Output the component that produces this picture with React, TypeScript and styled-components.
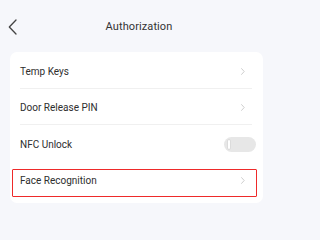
import React from "react";
import styled, { createGlobalStyle } from "styled-components";

const Global = createGlobalStyle`
  html, body { margin: 0; padding: 0; background: #f6f7fb; }
  body { font-family: Roboto, "Liberation Sans", Arial, sans-serif; }
  * { box-sizing: border-box; }
`;

const Page = styled.div`
  width: 270px;
  height: 218px;
  background: #f6f7fb;
  overflow: hidden;
`;

const Header = styled.div`
  height: 52px;
  display: grid;
  grid-template-columns: 1fr auto 1fr;
  align-items: center;
  padding: 0 0 0 8px;
`;

const BackBtn = styled.div`
  display: flex;
  align-items: center;
  width: 12px;
  height: 16px;
  margin-top: 2px;
`;

const Title = styled.div`
  font-size: 11px;
  color: #333;
  letter-spacing: 0.1px;
  margin-top: 1px;
`;

const Card = styled.div`
  margin: 0 7px 0 10px;
  background: #fff;
  border-radius: 7px;
  padding-top: 1px;
  padding-bottom: 6px;
`;

const Row = styled.div<{ $divider?: boolean }>`
  position: relative;
  height: 36px;
  margin: 0 11px 0 10px;
  padding: 2px 7px 0 0;
  display: flex;
  align-items: center;
  justify-content: space-between;
  border-bottom: ${(p) => (p.$divider ? "1px solid #f0f0f0" : "none")};
`;

const Label = styled.span`
  font-size: 10px;
  color: #2e2e2e;
`;

const Chevron = styled.svg`
  width: 4px;
  height: 7px;
`;

const Toggle = styled.div`
  width: 32px;
  height: 15px;
  border-radius: 8px;
  background: #e7e7e7;
  margin-right: -11px;
  padding: 2px 3px;
  display: flex;
  align-items: center;
`;

const Knob = styled.div`
  width: 4px;
  height: 11px;
  border-radius: 2px;
  background: #fff;
  border: 0.5px solid #dcdcdc;
`;

const Highlight = styled.div`
  position: absolute;
  left: -8px;
  right: -5px;
  top: 8px;
  bottom: 0;
  border: 1.5px solid #ee2a2a;
  border-radius: 1px;
  pointer-events: none;
`;

const RightChevron = () => (
  <Chevron viewBox="0 0 4 7">
    <path d="M0.6 0.6 L3.2 3.5 L0.6 6.4" fill="none" stroke="#c8c8c8" strokeWidth="0.9" strokeLinecap="round" strokeLinejoin="round" />
  </Chevron>
);

export default function App() {
  return (
    <Page>
      <Global />
      <Header>
        <BackBtn>
          <svg width="12" height="16" viewBox="0 0 12 16">
            <path d="M8 1 L1.3 8 L8 15" fill="none" stroke="#444" strokeWidth="1.3" strokeLinecap="round" strokeLinejoin="round" />
          </svg>
        </BackBtn>
        <Title>Authorization</Title>
        <div />
      </Header>
      <Card>
        <Row $divider>
          <Label>Temp Keys</Label>
          <RightChevron />
        </Row>
        <Row $divider>
          <Label>Door Release PIN</Label>
          <RightChevron />
        </Row>
        <Row>
          <Label>NFC Unlock</Label>
          <Toggle>
            <Knob />
          </Toggle>
        </Row>
        <Row>
          <Label>Face Recognition</Label>
          <RightChevron />
          <Highlight />
        </Row>
      </Card>
    </Page>
  );
}
